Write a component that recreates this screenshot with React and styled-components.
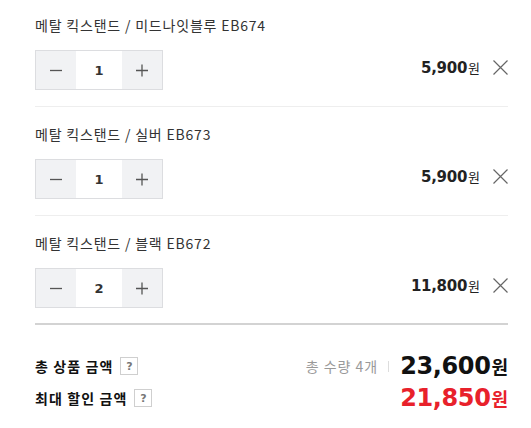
import React from "react";
import styled, { createGlobalStyle } from "styled-components";

const Global = createGlobalStyle`
  html, body { margin: 0; padding: 0; background: #fff; }
  body { font-family: "Noto Sans CJK KR", "Noto Sans", sans-serif; color: #333; }
  * { box-sizing: border-box; }
`;

const Page = styled.div`
  width: 531px;
  padding: 0 23px 0 35px;
`;

const List = styled.ul`
  list-style: none;
  margin: 0;
  padding: 0;
`;

const Item = styled.li`
  padding: 17px 0 16px;
  border-bottom: 1px solid #eeeeee;
  &:first-child { padding-top: 15px; }
  &:last-child { border-bottom: none; padding-bottom: 15px; }
`;

const Title = styled.div`
  font-size: 14px;
  line-height: 20px;
  color: #333;
  letter-spacing: 0.8px;
`;

const Controls = styled.div`
  margin-top: 15px;
  display: flex;
  align-items: center;
  justify-content: space-between;
`;

const Stepper = styled.div`
  display: flex;
  width: 128px;
  height: 40px;
  border: 1px solid #dcdde0;
`;

const StepButton = styled.button`
  width: 40px;
  height: 38px;
  border: none;
  padding: 0;
  margin: 0;
  background: #f1f2f4;
  display: flex;
  align-items: center;
  justify-content: center;
  cursor: pointer;
`;

const Qty = styled.div`
  flex: 1;
  display: flex;
  align-items: center;
  justify-content: center;
  background: #fff;
  font-family: "DejaVu Sans", sans-serif;
  font-weight: bold;
  font-size: 13px;
  color: #333;
`;

const PriceWrap = styled.div`
  display: flex;
  align-items: center;
  margin-top: -5px;
`;

const Price = styled.span`
  display: flex;
  align-items: baseline;
  color: #222;
`;

const PriceNum = styled.span`
  font-family: "DejaVu Sans", sans-serif;
  font-weight: bold;
  font-size: 15px;
  letter-spacing: -0.3px;
`;

const Won = styled.span`
  font-size: 13px;
  margin-left: 1px;
`;

const RemoveButton = styled.button`
  margin-left: 12px;
  width: 16px;
  height: 16px;
  padding: 0;
  border: none;
  background: none;
  display: flex;
  align-items: center;
  justify-content: center;
  cursor: pointer;
`;

const Summary = styled.div`
  border-top: 2px solid #d3d3d3;
  padding-top: 25px;
`;

const SumRow = styled.div`
  display: flex;
  align-items: center;
  justify-content: space-between;
  height: 32px;
`;

const Label = styled.div`
  display: flex;
  align-items: center;
  font-size: 14px;
  font-weight: bold;
  color: #111;
  letter-spacing: 1.1px;
`;

const Help = styled.span`
  margin-left: 7px;
  width: 18px;
  height: 18px;
  border: 1px solid #cfcfcf;
  display: inline-flex;
  align-items: center;
  justify-content: center;
  font-family: "DejaVu Sans", sans-serif;
  font-size: 11px;
  font-weight: bold;
  letter-spacing: 0;
  color: #777;
`;

const Right = styled.div`
  display: flex;
  align-items: center;
`;

const Count = styled.span`
  font-size: 14px;
  color: #999;
  letter-spacing: 1px;
`;

const Sep = styled.span`
  width: 1px;
  height: 11px;
  background: #dddddd;
  margin: 0 11px 0 10px;
`;

const Total = styled.span`
  display: flex;
  align-items: baseline;
  color: ${(p) => p.$color};
`;

const TotalNum = styled.span`
  font-family: "DejaVu Sans", sans-serif;
  font-weight: bold;
  font-size: 24px;
  letter-spacing: -0.4px;
`;

const TotalWon = styled.span`
  font-size: 18px;
  font-weight: bold;
  margin-left: 1px;
`;

const Minus = () => (
  <svg width="14" height="14" viewBox="0 0 14 14">
    <path d="M1 7.5h12" stroke="#555" strokeWidth="1.3" />
  </svg>
);
const Plus = () => (
  <svg width="14" height="14" viewBox="0 0 14 14">
    <path d="M1 7.5h12M7 1.5v12" stroke="#555" strokeWidth="1.3" />
  </svg>
);
const Close = () => (
  <svg width="15" height="15" viewBox="0 0 15 15">
    <path d="M0.5 0.5l14 14M14.5 0.5l-14 14" stroke="#666" strokeWidth="1.2" />
  </svg>
);

const items = [
  { name: "메탈 킥스탠드 / 미드나잇블루 EB674", qty: 1, price: "5,900" },
  { name: "메탈 킥스탠드 / 실버 EB673", qty: 1, price: "5,900" },
  { name: "메탈 킥스탠드 / 블랙 EB672", qty: 2, price: "11,800" },
];

export default function App() {
  return (
    <Page>
      <Global />
      <List>
        {items.map((it) => (
          <Item key={it.name}>
            <Title>{it.name}</Title>
            <Controls>
              <Stepper>
                <StepButton aria-label="감소"><Minus /></StepButton>
                <Qty>{it.qty}</Qty>
                <StepButton aria-label="증가"><Plus /></StepButton>
              </Stepper>
              <PriceWrap>
                <Price>
                  <PriceNum>{it.price}</PriceNum>
                  <Won>원</Won>
                </Price>
                <RemoveButton aria-label="삭제"><Close /></RemoveButton>
              </PriceWrap>
            </Controls>
          </Item>
        ))}
      </List>
      <Summary>
        <SumRow>
          <Label>총 상품 금액<Help>?</Help></Label>
          <Right>
            <Count>총 수량 4개</Count>
            <Sep />
            <Total $color="#111">
              <TotalNum>23,600</TotalNum>
              <TotalWon>원</TotalWon>
            </Total>
          </Right>
        </SumRow>
        <SumRow>
          <Label>최대 할인 금액<Help>?</Help></Label>
          <Right>
            <Total $color="#e8212b">
              <TotalNum>21,850</TotalNum>
              <TotalWon>원</TotalWon>
            </Total>
          </Right>
        </SumRow>
      </Summary>
    </Page>
  );
}
